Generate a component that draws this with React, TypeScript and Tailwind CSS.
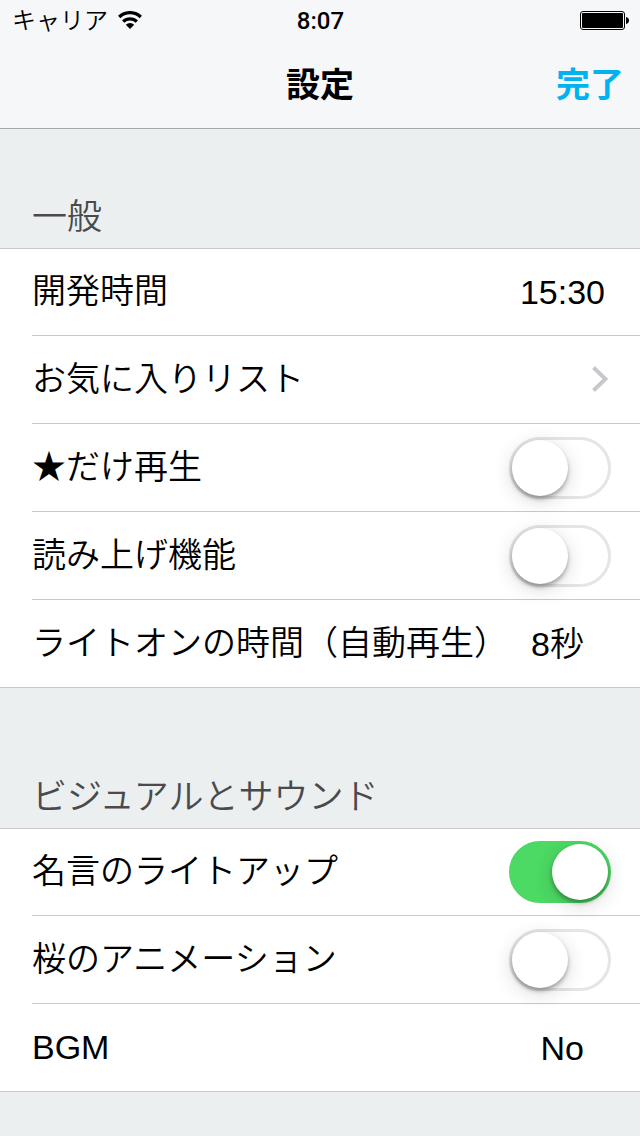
import type { ReactNode } from "react";
import { useState } from "react";

interface SectionProps {
    title: string;
    className: string;
    children: ReactNode;
}

function Section({ title, className, children }: SectionProps) {
    return (
        <section>
            <h2 className={`px-8 text-[35px] leading-10 font-[350] text-[#4a4a4c] ${className}`}>{title}</h2>
            <ul className="border-y border-[#c8c7cc] bg-white pl-8">{children}</ul>
        </section>
    );
}

// The outer rows are one pixel shorter, the list's own border takes it
const rowClass =
    "flex h-[88px] items-center justify-between border-b border-[#c8c7cc] text-[34px] leading-10 font-[350] first:h-[87px] last:h-[87px] last:border-b-0";

interface ValueRowProps {
    label: string;
    value: string;
    className: string;
}

function ValueRow({ label, value, className }: ValueRowProps) {
    return (
        <li className={rowClass}>
            <span className="pb-0.5">{label}</span>
            <button type="button" aria-label={`${label} ${value}`} className={`whitespace-nowrap ${className}`}>
                {value}
            </button>
        </li>
    );
}

interface SwitchRowProps {
    id: string;
    label: string;
    on?: boolean;
}

function SwitchRow({ id, label, on = false }: SwitchRowProps) {
    const [checked, setChecked] = useState(on);

    return (
        <li className={rowClass}>
            <label htmlFor={id} className="pb-0.5">
                {label}
            </label>
            <input
                id={id}
                type="checkbox"
                role="switch"
                checked={checked}
                onChange={(e) => setChecked(e.target.checked)}
                className="mr-[29px] h-[62px] w-[102px] shrink-0 cursor-pointer appearance-none rounded-full border-3 border-[#e5e5e5] bg-white transition-colors before:block before:size-14 before:rounded-full before:bg-white before:shadow-[0_3px_4px_rgba(0,0,0,0.3),0_5px_20px_rgba(0,0,0,0.16)] before:transition-transform checked:border-[#4cd964] checked:bg-[#4cd964] checked:before:translate-x-10"
            />
        </li>
    );
}

function WifiIcon() {
    return (
        <svg viewBox="0 0 24 18" className="h-[18px] w-6" fill="none" stroke="#000" strokeWidth="3.2">
            <path d="M1.2 6a15.4 15.4 0 0 1 21.6 0" />
            <path d="M5.2 10.6a9.6 9.6 0 0 1 13.6 0" />
            <path d="M12 18l-4.2-4.2a6 6 0 0 1 8.4 0z" fill="#000" stroke="none" />
        </svg>
    );
}

function BatteryIcon() {
    return (
        <svg viewBox="0 0 49 19" className="h-[19px] w-[49px]">
            <rect x="0.5" y="0.5" width="44" height="18" rx="2.5" fill="none" stroke="#000" />
            <rect x="2" y="2" width="41" height="15" rx="1" />
            <path d="M46 6c2 .4 3 1.6 3 3.5s-1 3.1-3 3.5z" />
        </svg>
    );
}

export default function App() {
    return (
        <div
            lang="ja"
            className="min-h-screen bg-[#ebeff0] font-['Liberation_Sans','Noto_Sans_CJK_JP',sans-serif] text-black"
        >
            <header className="border-b border-[#a7a8aa] bg-[#f6f7f9]">
                {/* Status bar */}
                <div className="grid h-10 grid-cols-3 items-center pr-[11px] pl-3">
                    <div className="flex items-center gap-2.5 text-2xl leading-9 font-[350]">
                        <span className="pt-0.5">キャリア</span>
                        <WifiIcon />
                    </div>
                    <span className="pt-0.5 text-center font-[Roboto,sans-serif] text-2xl leading-9 font-medium">
                        8:07
                    </span>
                    <div className="flex justify-end">
                        <BatteryIcon />
                    </div>
                </div>

                {/* Navigation bar */}
                <div className="grid h-[88px] grid-cols-3 items-center px-4 pt-0.5 text-[34px] leading-10 font-bold">
                    <h1 className="col-start-2 text-center">設定</h1>
                    <button type="button" className="justify-self-end text-[#00b2ef]">
                        完了
                    </button>
                </div>
            </header>

            <main>
                <Section title="一般" className="pt-[68px] pb-[11px]">
                    <ValueRow label="開発時間" value="15:30" className="mr-[35px]" />
                    <li className={rowClass}>
                        <a href="#favorites" className="flex h-full flex-1 items-center justify-between pr-8 pb-0.5">
                            お気に入りリスト
                            <svg viewBox="0 0 16 26" className="h-[26px] w-4" fill="none" stroke="#c7c7cc" strokeWidth="4">
                                <path d="M1.5 1.5L13.5 13 1.5 24.5" />
                            </svg>
                        </a>
                    </li>
                    <SwitchRow id="starred" label="★だけ再生" />
                    <SwitchRow id="speech" label="読み上げ機能" />
                    <ValueRow label="ライトオンの時間（自動再生）" value="8秒" className="mr-14" />
                </Section>

                <Section title="ビジュアルとサウンド" className="pt-[89px] pb-[11px]">
                    <SwitchRow id="light-up" label="名言のライトアップ" on />
                    <SwitchRow id="sakura" label="桜のアニメーション" />
                    <ValueRow label="BGM" value="No" className="mr-14" />
                </Section>
            </main>
        </div>
    );
}
